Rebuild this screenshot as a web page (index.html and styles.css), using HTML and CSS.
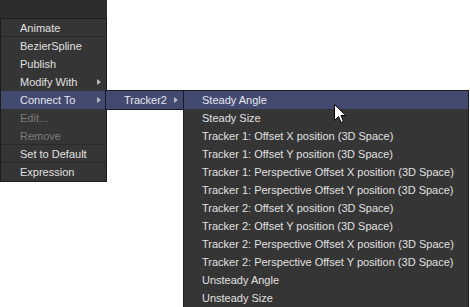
FILE: index.html
```html
<!DOCTYPE html>
<html>
<head>
<meta charset="utf-8">
<link rel="stylesheet" href="styles.css">
</head>
<body>
<div class="toolbar"></div>

<div class="menu menu-main">
  <div class="item sep">Animate</div>
  <div class="item">BezierSpline</div>
  <div class="item">Publish</div>
  <div class="item has-sub">Modify With<span class="arrow"></span></div>
  <div class="item has-sub active">Connect To<span class="arrow"></span></div>
  <div class="item disabled">Edit...</div>
  <div class="item disabled sep">Remove</div>
  <div class="item sep">Set to Default</div>
  <div class="item">Expression</div>
</div>

<div class="menu menu-tracker">
  <div class="item has-sub active">Tracker2<span class="arrow"></span></div>
</div>

<div class="menu menu-params">
  <div class="item active">Steady Angle</div>
  <div class="item">Steady Size</div>
  <div class="item">Tracker 1: Offset X position (3D Space)</div>
  <div class="item">Tracker 1: Offset Y position (3D Space)</div>
  <div class="item">Tracker 1: Perspective Offset X position (3D Space)</div>
  <div class="item">Tracker 1: Perspective Offset Y position (3D Space)</div>
  <div class="item">Tracker 2: Offset X position (3D Space)</div>
  <div class="item">Tracker 2: Offset Y position (3D Space)</div>
  <div class="item">Tracker 2: Perspective Offset X position (3D Space)</div>
  <div class="item">Tracker 2: Perspective Offset Y position (3D Space)</div>
  <div class="item">Unsteady Angle</div>
  <div class="item">Unsteady Size</div>
</div>

<svg class="cursor" width="13" height="20" viewBox="0 0 13 20">
  <path d="M0.5 0.5 L0.5 16.5 L4.5 12.5 L7 18.5 L9.5 17.5 L7 11.5 L12 11.5 Z" fill="#fff" stroke="#000" stroke-width="1"/>
</svg>
</body>
</html>
```
FILE: styles.css
```css
html, body {
  margin: 0;
  padding: 0;
  background: #ffffff;
  width: 470px;
  height: 307px;
  overflow: hidden;
  position: relative;
  font-family: "Liberation Sans", Arial, sans-serif;
  font-size: 11px;
}

.toolbar {
  width: 107px;
  height: 18px;
  background: #2d2d2d;
}

.menu {
  position: absolute;
  background: #353535;
  border: 1px solid #1c1c1c;
  box-sizing: border-box;
}

.menu-main {
  left: 0;
  top: 18px;
  width: 107px;
}

.menu-tracker {
  left: 105px;
  top: 90px;
  width: 79px;
}

.menu-params {
  left: 183px;
  top: 90px;
  width: 286px;
  border-bottom: none;
}

.item {
  position: relative;
  height: 18px;
  line-height: 18px;
  padding-left: 19px;
  color: #e0e0e0;
  white-space: nowrap;
  box-sizing: border-box;
}

.menu-params .item {
  padding-left: 18px;
}

.item.sep {
  border-bottom: 1px solid #2a2a2a;
}

.item.active {
  background: #424a6f;
  color: #e6e6ee;
}

.item.disabled {
  color: #7c7c7c;
}

.menu-tracker .item {
  padding-left: 18px;
}

.arrow {
  position: absolute;
  right: 5px;
  top: 6px;
  width: 0;
  height: 0;
  border-top: 3.5px solid transparent;
  border-bottom: 3.5px solid transparent;
  border-left: 4px solid #b8b8c0;
}

.cursor {
  position: absolute;
  left: 334px;
  top: 104px;
}
```
